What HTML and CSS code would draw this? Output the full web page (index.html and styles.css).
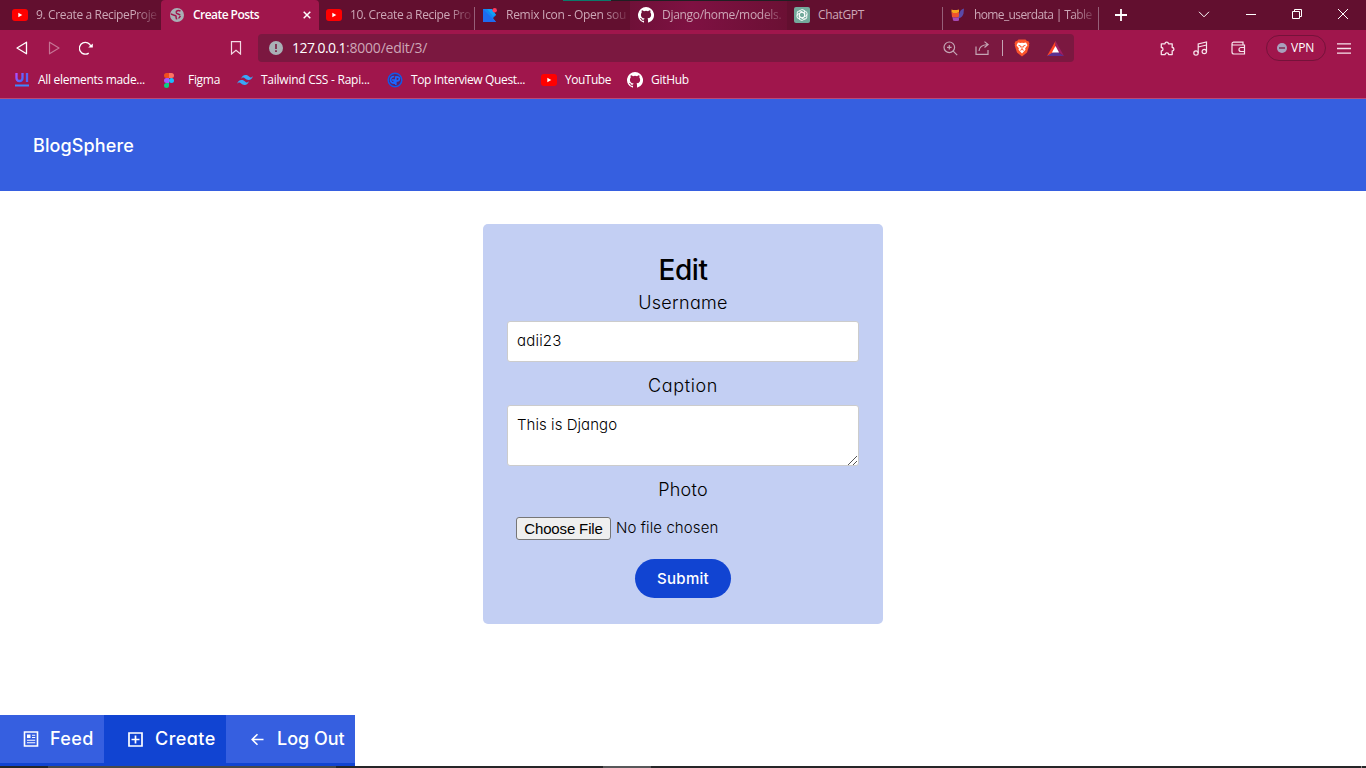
FILE: index.html
```html
<!DOCTYPE html>
<html lang="en">
<head>
<meta charset="utf-8">
<title>Create Posts</title>
<link rel="stylesheet" href="styles.css">
</head>
<body>
<svg class="defs" aria-hidden="true">
  <symbol id="yt" viewBox="0 0 16 12"><rect width="16" height="12" rx="3" fill="#f00"/><path d="M6.300 3.700v4.600L10.300 6z" fill="#fff"/></symbol>
  <symbol id="gh" viewBox="0 0 16 16"><path fill="#fff" fill-rule="evenodd" d="M8 0a8 8 0 0 0-2.530 15.590c.4.070.55-.17.55-.38v-1.490c-2.010.37-2.530-.49-2.690-.94-.09-.23-.48-.94-.82-1.130-.28-.15-.68-.52-.01-.53.63-.01 1.080.58 1.230.82.72 1.210 1.870.87 2.330.66.070-.52.28-.87.51-1.070-1.780-.2-3.640-.89-3.640-3.950 0-.87.31-1.590.82-2.150-.08-.2-.36-1.020.08-2.120 0 0 .67-.21 2.200.82a7.600 7.600 0 0 1 4 0c1.530-1.040 2.200-.82 2.200-.82.44 1.100.16 1.920.08 2.120.51.56.82 1.270.82 2.150 0 3.070-1.870 3.750-3.650 3.950.29.25.54.73.54 1.480v2.200c0 .21.15.46.55.38A8 8 0 0 0 8 0z"/></symbol>
</svg>
<header class="browser">
  <div class="tabs">
    <div class="tab tab-first"><svg class="ico yt"><use href="#yt"/></svg><span class="tab-title fade">9. Create a RecipeProje</span></div>
    <div class="tab tab-active"><svg class="ico i14" viewBox="0 0 14 14"><circle cx="7" cy="7" r="7" fill="#a9b0b6"/><path d="M10.500 3.200C8 1.800 5.800 3 6.300 4.700c.5 1.500 3.300 1 3.700 2.600M.8 6c1.500.2 2 1.200 3.300 1.300 1.600.1 2.300.7 2 1.800-.2.900.5 1.300.6 2.300M8.700 10.500c.2-1.200 1.500-1.500 1.600-2.600" fill="none" stroke="#a0164c" stroke-width="1.500"/></svg><span class="tab-title">Create Posts</span><svg class="close" viewBox="0 0 8 8"><path d="M.7.700l6.600 6.600M7.300.700L.7 7.300" stroke="#fff" stroke-width="1.500"/></svg></div>
    <div class="tab w156"><svg class="ico yt"><use href="#yt"/></svg><span class="tab-title fade">10. Create a Recipe Pro</span></div>
    <div class="tab w155 sep"><svg class="ico i14" viewBox="0 0 14 14"><path d="M0 1h9l4 6-3 3 3 4H0z" fill="#1285f5"/><path d="M0 1l13 13H0z" fill="#1e6bf0"/><path d="M4 1h5l4 6-3 1z" fill="#12a0f5"/><circle cx="11.700" cy="2.300" r="2.200" fill="#ff3b5c"/></svg><span class="tab-title fade remix">Remix Icon - Open sou</span></div>
    <div class="tab w157 tab-hover"><svg class="ico i16"><use href="#gh"/></svg><span class="tab-title fade django">Django/home/models.</span></div>
    <div class="tab w156"><svg class="ico i16" viewBox="0 0 16 16"><rect width="16" height="16" rx="2" fill="#74aa9c"/><g fill="none" stroke="#fff" stroke-width=".9"><path id="petal" d="M8 5L5.300 6.500v4.600A2.500 2.500 0 0 0 9.500 12.700L11 11.800"/><use href="#petal" transform="rotate(60 8 8)"/><use href="#petal" transform="rotate(120 8 8)"/><use href="#petal" transform="rotate(180 8 8)"/><use href="#petal" transform="rotate(240 8 8)"/><use href="#petal" transform="rotate(300 8 8)"/></g></svg><span class="tab-title">ChatGPT</span></div>
    <div class="tab w156 sep sep-r"><svg class="ico i14" viewBox="0 0 14 14"><path d="M.5 1.500q3 1 7.500 0v3q-4 1-7.500 0z" fill="#f7a41d"/><path d="M.5 4.500q3 1 7.500 0V9q-4 1-7 0z" fill="#f0532d"/><path d="M1.500 9q3 1 6.500 0v3.500q-3 1-6 0z" fill="#a64bb5"/><path d="M13 .5q-4 1-5 6l-.5 4q4-1 5-5z" fill="#5a4aa8"/></svg><span class="tab-title fade userdata">home_userdata | Table</span></div>
    <svg class="plus" viewBox="0 0 12 12"><path d="M6 0v12M0 6h12" stroke="#fff" stroke-width="1.800"/></svg>
    <div class="window">
      <svg width="12" height="7" viewBox="0 0 12 7"><path d="M1 .8l5 5 5-5" fill="none" stroke="#fff"/></svg>
      <svg width="10" height="10" viewBox="0 0 10 10"><path d="M0 5.500h10" stroke="#fff"/></svg>
      <svg width="10" height="10" viewBox="0 0 10 10"><path d="M.5 2.500h7v7h-7zM2.500 2.500v-2h7v7h-2" fill="none" stroke="#fff"/></svg>
      <svg width="10" height="10" viewBox="0 0 10 10"><path d="M0 0l10 10M10 0L0 10" stroke="#fff"/></svg>
    </div>
    <div class="top-line"></div>
  </div>

  <div class="toolbar">
    <div class="nav">
      <svg width="12" height="14" viewBox="0 0 12 14"><path d="M10.500 1.200v11.600L1 7z" fill="none" stroke="#fff" stroke-width="1.300" stroke-linejoin="round"/></svg>
      <svg class="dim" width="12" height="14" viewBox="0 0 12 14"><path d="M1.500 1.200v11.600L11 7z" fill="none" stroke="#fff" stroke-width="1.200" stroke-linejoin="round"/></svg>
      <svg width="15" height="14" viewBox="0 0 15 14"><path d="M9.700 12.100A5.900 5.900 0 1 1 11.900 5.300" fill="none" stroke="#fff" stroke-width="1.300"/><path d="M9.200 6.600h4.600V2.500z" fill="#fff"/></svg>
    </div>
    <svg class="mark" width="12" height="14" viewBox="0 0 12 14"><path d="M1.500.7h9v12.300L6 9.200 1.500 13z" fill="none" stroke="#f3d9e3" stroke-width="1.200"/></svg>
    <div class="address">
      <svg width="14" height="14" viewBox="0 0 14 14"><circle cx="7" cy="7" r="7" fill="#a9b0b6"/><path d="M7 3v5M7 9.300v1.800" stroke="#7b1840" stroke-width="1.600"/></svg>
      <span class="url"><span class="host">127.0.0.1</span><span class="path">:8000/edit/3/</span></span>
      <svg width="15" height="15" viewBox="0 0 15 15"><g fill="none" stroke="#c4a5b4" stroke-width="1.200"><circle cx="6.300" cy="6.300" r="5.300"/><path d="M10.200 10.200l4 4M6.300 4v4.600M4 6.300h4.600"/></g></svg>
      <svg class="share" width="15" height="14" viewBox="0 0 15 14"><g fill="none" stroke="#c4a5b4" stroke-width="1.200"><path d="M1 5.500v7.800h12V9M4 10q.5-6 8.500-6.500M9.500.6l3.600 2.900-3.600 3"/></g></svg>
      <i class="bar"></i>
      <svg class="brave" width="16" height="18" viewBox="0 0 16 18"><path d="M4.500.5h7L13 2l1.500.2 1 2.300-.5 1 .3 1-2.300 7L8 17.600 3 13.500.7 6.500l.3-1-.5-1 1-2.300L3 2z" fill="#fb542b"/><path d="M4 3.500l2.500.5L8 3.700l1.500.3L12 3.500l1.500 2.700-2.400 3 .4 1.600L8 14.500l-3.500-3.700.4-1.600-2.400-3z" fill="#fff"/><path d="M4.500 6.300l2.300.8-.5 1.300M11.500 6.300l-2.300.8.500 1.300M8 7v3M6.300 11.300L8 10.400l1.700.9" stroke="#fb542b" fill="none"/></svg>
      <svg width="17" height="15" viewBox="0 0 17 15"><path d="M8.500 0L0 15l8.500-4z" fill="#ff4724"/><path d="M8.500 0L17 15 8.500 9z" fill="#9e1f63"/><path d="M0 15l6-3.700h5L17 15z" fill="#5b2f91"/><path d="M8.500 5l3.600 6.500H4.900z" fill="#fff"/></svg>
    </div>
    <div class="tools">
      <svg width="15" height="15" viewBox="0 0 15 15"><path d="M1.300 2.800H5a1.700 1.700 0 0 1 3.400 0h3.800v3.700a1.700 1.700 0 0 1 0 3.400v3.700H8.600a1.700 1.700 0 0 0-3.500 0H1.300V9.900a1.700 1.700 0 0 0 0-3.400z" fill="none" stroke="#f7e4ec" stroke-width="1.300" stroke-linejoin="round"/></svg>
      <svg width="15" height="15" viewBox="0 0 15 15"><g fill="none" stroke="#f7e4ec" stroke-width="1.200"><circle cx="3" cy="12" r="2.200"/><circle cx="11.300" cy="10.500" r="2.200"/><path d="M5.200 12V3l8.300-2v9.500M5.200 6l8.300-2"/></g></svg>
      <svg width="15" height="14" viewBox="0 0 15 14"><path d="M1 2.500V11q0 2 2 2h10.500V4H2.500Q1 4 1 2.700T2.500 1.200H12V4M13.500 6.500H10a2 2 0 0 0 0 4h3.500" fill="none" stroke="#f7e4ec" stroke-width="1.200"/></svg>
      <div class="vpn"><svg width="10" height="10" viewBox="0 0 10 10"><circle cx="5" cy="5" r="5" fill="#a9a0bd"/><path d="M2 5h6" stroke="#7b1840" stroke-width="1.300"/></svg><span>VPN</span></div>
      <svg width="14" height="11" viewBox="0 0 14 11"><path d="M0 .8h14M0 5.500h14M0 10.200h14" stroke="#f7e4ec" stroke-width="1.300"/></svg>
    </div>
  </div>

  <div class="bookmarks">
    <a class="bm bm1"><svg width="14" height="14" viewBox="0 0 14 14"><defs><linearGradient id="ug" y2="1" x2="1"><stop stop-color="#b44cff"/><stop offset="1" stop-color="#3b6cff"/></linearGradient></defs><path d="M1.500 0v5q0 3 3 3t3-3V0" fill="none" stroke="url(#ug)" stroke-width="2.300"/><path d="M12 0v9" stroke="#5a62f5" stroke-width="2.300"/><path d="M0 12.500h14" stroke="#3f86ff" stroke-width="2"/></svg><span>All elements made...</span></a>
    <a class="bm bm2"><svg width="10" height="15" viewBox="0 0 10 15"><path d="M5 0H2.500a2.500 2.500 0 0 0 0 5H5z" fill="#f24e1e"/><path d="M5 0h2.500a2.500 2.500 0 0 1 0 5H5z" fill="#ff7262"/><path d="M5 5H2.500a2.500 2.500 0 0 0 0 5H5z" fill="#a259ff"/><circle cx="7.500" cy="7.500" r="2.500" fill="#1abcfe"/><path d="M5 10H2.500A2.500 2.500 0 1 0 5 12.500z" fill="#0acf83"/></svg><span>Figma</span></a>
    <a class="bm bm3"><svg width="16" height="10" viewBox="0 0 16 10"><path d="M4 4Q5.200 0 8.500 0c3 0 3.300 2 5 2.400Q15 2.700 16 1q-1.200 4-4.500 4c-3 0-3.200-2-5-2.400Q5 2.300 4 4zM0 9q1.200-4 4.500-4c3 0 3.300 2 5 2.400Q11 7.700 12 6q-1.200 4-4.500 4c-3 0-3.200-2-5-2.400Q1 7.300 0 9z" fill="#38a8f8"/></svg><span>Tailwind CSS - Rapi...</span></a>
    <a class="bm bm4"><svg width="16" height="16" viewBox="0 0 16 16"><circle cx="8" cy="8" r="6.800" fill="#5c2168" stroke="#1557e6" stroke-width="1.500"/><path d="M7.200 4.500Q3.800 4.500 3.500 8q.3 3.200 3.700 3.200V8H5M8.800 13V5q3.600-.5 3.600 1.800T9 9" fill="none" stroke="#1c67ff" stroke-width="1.700"/></svg><span>Top Interview Quest...</span></a>
    <a class="bm bm5"><svg width="16" height="12"><use href="#yt"/></svg><span>YouTube</span></a>
    <a class="bm bm6"><svg width="16" height="16"><use href="#gh"/></svg><span>GitHub</span></a>
  </div>
</header>

<main class="page">
  <div class="site-head"><span>BlogSphere</span></div>
  <form class="card" onsubmit="return false">
    <h1>Edit</h1>
    <label class="user">Username</label>
    <div class="field adi">adii23</div>
    <label class="cap">Caption</label>
    <div class="field area">This is Django<svg class="grip" width="9" height="9" viewBox="0 0 9 9"><path d="M0 9l9-9M5 9l4-4" stroke="#555" stroke-width="1"/></svg></div>
    <label class="photo">Photo</label>
    <div class="file"><button type="button">Choose File</button><span>No file chosen</span></div>
    <button class="submit">Submit</button>
  </form>
</main>

<nav class="dock">
  <a class="d1"><svg width="16" height="16" viewBox="0 0 16 16"><path d="M1.500 1h13v14h-13z" fill="none" stroke="#fff" stroke-width="1.600"/><path d="M4 3.500h3.500V7H4z" fill="#fff"/><path d="M9 4.200h3.200M9 6.500h3.200M4 9.200h8.200M4 11.800h8.200" stroke="#fff" stroke-width="1.100"/></svg><span>Feed</span></a>
  <a class="d2"><svg width="15" height="15" viewBox="0 0 15 15"><path d="M1 1h13v13H1z" fill="none" stroke="#fff" stroke-width="1.700"/><path d="M7.500 3.500v8M3.500 7.500h8" stroke="#fff" stroke-width="1.700"/></svg><span>Create</span></a>
  <a class="d3"><svg width="13" height="13" viewBox="0 0 13 13"><path d="M12.500 6.500H1.500M6.500 1.200L1.200 6.500l5.300 5.300" fill="none" stroke="#fff" stroke-width="1.600"/></svg><span>Log Out</span></a>
</nav>
<footer class="taskbar"><i class="search"></i><i class="running"></i><i class="corner"></i></footer>
</body>
</html>
```
FILE: styles.css
```css
* { box-sizing: border-box; }
body { margin: 0; width: 1366px; height: 768px; overflow: hidden; display: flex; flex-direction: column; background: #fff; font-family: Inter, sans-serif; color: #000; }
.defs { position: absolute; width: 0; height: 0; }
svg { display: block; flex: none; }
span, label { white-space: nowrap; }

/* Browser window */
.browser { height: 99px; flex: none; background: #a0164c; border-bottom: 1px solid #b94a76; font-family: "Open Sans", "Noto Sans", sans-serif; color: #fff; display: flex; flex-direction: column; }
.tabs { position: relative; height: 30px; display: flex; background: #620f2f; }
.top-line { position: absolute; left: 563px; top: 0; width: 241px; height: 1px; background: linear-gradient(90deg, #0b7a6b 48px, #1f1f22 48px); }
.tab { position: relative; flex: none; display: flex; align-items: center; padding-left: 7px; font-size: 12px; letter-spacing: -.36px; color: #cda7b7; }
.tab-first { width: 161px; padding-left: 12px; }
.tab-active { width: 158px; padding-left: 9px; background: #a0164c; color: #fff; font-weight: 650; font-size: 12px; letter-spacing: -.55px; border-radius: 4px 4px 0 0; }
.tab-active .tab-title { flex: 1; }
.w155 { width: 155px; }
.w156 { width: 156px; }
.w157 { width: 157px; }
.w155.sep { padding-left: 8px; }
.tab-hover { padding-left: 8px; background: linear-gradient(90deg, #6f1038, #7e1142 40%, #6b1034); }
.sep::before, .sep-r::after { content: ""; position: absolute; left: -1px; top: 7px; width: 1px; height: 23px; background: #966079; }
.sep-r { padding-left: 8px; }
.sep-r::after { left: 155px; }
.ico { width: 14px; height: 14px; }
.i16, .yt { width: 16px; height: 16px; }
.yt { height: 12px; }
.tab-title { margin-left: 8px; line-height: 16px; padding-bottom: 1px; }
.i14 + .tab-title { margin-left: 9px; }
.fade { width: 123px; -webkit-mask-image: linear-gradient(90deg, #000 80%, transparent 102%); mask-image: linear-gradient(90deg, #000 80%, transparent 102%); }
.remix { letter-spacing: -.27px; }
.django { letter-spacing: -.3px; }
.userdata { letter-spacing: -.62px; }
.close { width: 8px; height: 8px; margin-right: 8px; }
.plus { width: 12px; height: 12px; margin: 9px 0 0 16px; }
.window { margin: 9px 18px 0 auto; display: flex; gap: 36px; align-items: center; height: 10px; }

.toolbar { height: 36px; display: flex; align-items: center; }
.nav { display: flex; align-items: center; gap: 20px; padding-left: 16px; width: 230px; }
.nav svg:last-child { margin-left: -1px; }
.dim { opacity: .4; }
.mark { margin-right: 16px; }
.address { width: 816px; height: 28px; background: #7b1840; border-radius: 4px; display: flex; align-items: center; padding: 0 10px 0 11px; }
.url { font-size: 14px; line-height: 18px; padding-bottom: 1px; margin-left: 9px; flex: 1; display: flex; }
.host { letter-spacing: -.56px; }
.path { color: #cda7b7; letter-spacing: -.22px; }
.share { margin-left: 17px; }
.bar { width: 1px; height: 16px; background: #c4a5b4; margin: 0 11px 0 12px; }
.brave { margin-right: 17px; }
.tools { display: flex; align-items: center; padding-left: 86px; gap: 20px; }
.tools > svg:nth-child(2) { margin-left: -2px; }
.tools > svg:nth-child(3) { margin-left: 3px; }
.vpn { height: 26px; width: 60px; border: 1px solid #75123a; border-radius: 13px; display: flex; align-items: center; gap: 4px; padding-left: 10px; font-size: 12px; margin-right: -9px; }
.vpn span { padding-bottom: 1px; }

.bookmarks { height: 28px; display: flex; align-items: center; padding-left: 15px; font-size: 12px; letter-spacing: -.3px; }
.bookmarks span { padding-bottom: 1px; }
.bm { display: flex; align-items: center; gap: 8px; }
.bm1 { width: 149px; gap: 9px; }
.bm2 { width: 73px; gap: 14px; }
.bm3 { width: 150px; gap: 8px; letter-spacing: -.25px; }
.bm4 { width: 154px; letter-spacing: -.36px; }
.bm5 { width: 86px; letter-spacing: -.48px; }
.bm6 { letter-spacing: -.3px; }

/* Page */
.page { flex: 1; font-feature-settings: "cv11"; }
.site-head { height: 92px; background: #365fe0; color: #fff; display: flex; align-items: center; padding: 0 0 0 33px; font-size: 18px; font-weight: 450; letter-spacing: .12px; }
.card { width: 400px; height: 400px; margin: 33px auto 0; background: #c3cff3; border-radius: 5px; padding: 27px 24px; display: flex; flex-direction: column; align-items: center; }
.card > * { flex: none; }
h1 { margin: 0; font-size: 28px; line-height: 38px; font-weight: 550; letter-spacing: -.4px; }
label { font-size: 18px; line-height: 28px; font-weight: 330; }
.user { letter-spacing: .3px; }
.cap { letter-spacing: .6px; }
.photo { letter-spacing: .25px; }
.field { width: 352px; height: 41px; background: #fff; border: 1px solid #ccc; border-radius: 3px; padding: 0 9px; margin: 4px 0 10px; font-size: 15px; line-height: 38px; font-weight: 350; letter-spacing: .05px; }
.adi { letter-spacing: .2px; }
.area { position: relative; height: 61px; margin-top: 5px; line-height: 37px; }
.grip { position: absolute; right: 1px; bottom: 0; }
.file { width: 352px; display: flex; align-items: center; gap: 5px; padding-left: 9px; margin: 13px 0 19px; font-size: 15px; font-weight: 350; letter-spacing: .1px; }
.file span { padding-bottom: 2px; }
.file button { width: 95px; height: 23px; padding: 0; border: 1px solid #767676; border-radius: 3px; background: #efefef; font: 15px "Liberation Sans", sans-serif; letter-spacing: -.15px; white-space: nowrap; }
.submit { width: 96px; height: 39px; border: 0; border-radius: 20px; background: #1144d2; color: #fff; font: 500 15px Inter, sans-serif; letter-spacing: .3px; padding: 0 0 1px; }

.dock { width: 355px; height: 51px; flex: none; background: #365fe0; border-bottom: 3px solid #1144d2; display: flex; color: #fff; font-size: 18px; font-weight: 450; font-feature-settings: "cv11"; }
.dock a { display: flex; align-items: center; }
.dock span { padding-bottom: 1px; }
.d1 { width: 104px; padding-left: 23px; gap: 11px; letter-spacing: .35px; }
.d2 { width: 122px; padding-left: 24px; gap: 12px; background: #1144d2; letter-spacing: .45px; }
.d3 { padding-left: 25px; gap: 13px; letter-spacing: -.03px; }
.taskbar { height: 2px; flex: none; background: #262628; display: flex; }
.search { width: 288px; margin-left: 48px; background: #48484a; }
.running { width: 48px; margin-left: 267px; background: #58585a; }
.corner { width: 1px; margin-left: 710px; background: #8a8a8a; }
```
